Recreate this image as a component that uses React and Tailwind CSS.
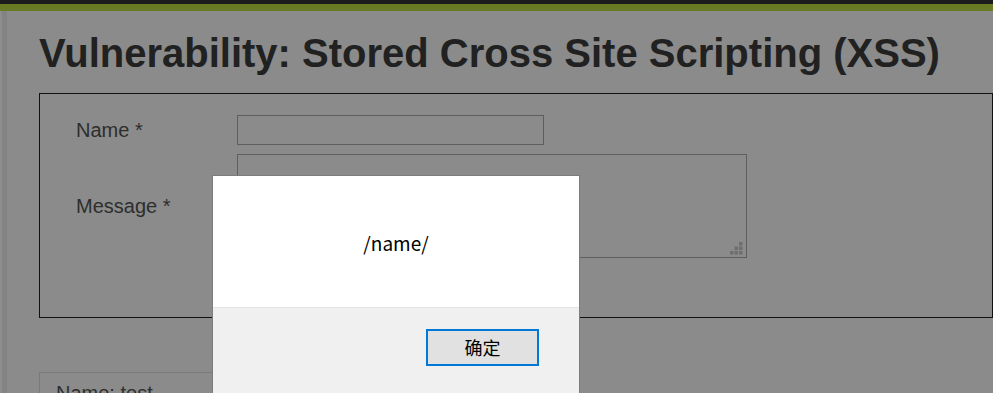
export default function App() {
  return (
    <div className="relative h-[393px] w-[993px] overflow-hidden bg-[#8a8b8a] font-['Liberation_Sans',Arial,sans-serif]">
      <div className="h-[4px] bg-[#1c1c1c]" />
      <div className="h-[7px] bg-[#687a23]" />
      <div className="flex h-[382px]">
        <div className="w-[2px] bg-[#8d8d8d]" />
        <div className="w-[5px] bg-[#838383]" />
        <div className="flex-1 pl-[32px]">
          <h1 className="mt-[18px] whitespace-nowrap text-[40px] font-bold leading-[48px] text-[#212121]">
            Vulnerability: Stored Cross Site Scripting (XSS)
          </h1>
          <div className="mt-[16px] h-[225px] border border-[#111111] pl-[36px] pt-[21px]">
            <div className="grid grid-cols-[161px_1fr] items-center gap-y-[9px] text-[20px] text-[#2e2e2e]">
              <div>Name *</div>
              <div>
                <input className="block h-[30px] w-[307px] border border-[#5e5e5e] bg-transparent" />
              </div>
              <div>Message *</div>
              <div className="relative w-[510px]">
                <textarea className="block h-[104px] w-[510px] resize-none border border-[#5e5e5e] bg-transparent" />
                <svg className="absolute bottom-[3px] right-[4px]" width="13" height="13" viewBox="0 0 13 13">
                  <rect x="9" y="0" width="3.5" height="3.5" fill="#6e6e6e" />
                  <rect x="4.5" y="4.5" width="3.5" height="3.5" fill="#6e6e6e" />
                  <rect x="9" y="4.5" width="3.5" height="3.5" fill="#6e6e6e" />
                  <rect x="0" y="9" width="3.5" height="3.5" fill="#6e6e6e" />
                  <rect x="4.5" y="9" width="3.5" height="3.5" fill="#6e6e6e" />
                  <rect x="9" y="9" width="3.5" height="3.5" fill="#6e6e6e" />
                </svg>
              </div>
            </div>
          </div>
          <div className="mt-[54px] w-[530px] border border-[#7a7a7a] pl-[16px] pt-[9px] text-[20px] leading-[23px] text-[#2e2e2e]">
            Name: test
          </div>
        </div>
      </div>

      <div className="absolute left-[212px] top-[175px] flex h-[230px] w-[368px] flex-col border border-[#7c7c7c] bg-white">
        <div className="flex h-[131px] items-center justify-center pt-[4px] font-['Noto_Sans_CJK_SC',sans-serif] text-[19px] text-black">
          /name/
        </div>
        <div className="flex-1 border-t border-[#e3e3e3] bg-[#f0f0f0]">
          <div className="flex justify-end pr-[40px] pt-[21px]">
            <div className="flex h-[37px] w-[113px] items-center justify-center border-2 border-[#0078d7] bg-[#e1e1e1] font-['Noto_Sans_CJK_SC',sans-serif] text-[18px] text-black">
              确定
            </div>
          </div>
        </div>
      </div>
    </div>
  );
}
